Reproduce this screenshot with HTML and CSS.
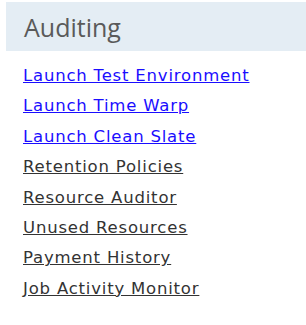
FILE: index.html
```html
<!DOCTYPE html>
<html>
<head>
<meta charset="utf-8">
<link rel="stylesheet" href="styles.css">
</head>
<body>
<div class="panel">
  <div class="header"><h2 class="title">Auditing</h2></div>
  <ul class="links">
    <li><a class="link link-blue" href="#">Launch Test Environment</a></li>
    <li><a class="link link-blue" href="#">Launch Time Warp</a></li>
    <li><a class="link link-blue" href="#">Launch Clean Slate</a></li>
    <li><a class="link" href="#">Retention Policies</a></li>
    <li><a class="link" href="#">Resource Auditor</a></li>
    <li><a class="link" href="#">Unused Resources</a></li>
    <li><a class="link" href="#">Payment History</a></li>
    <li><a class="link" href="#">Job Activity Monitor</a></li>
  </ul>
</div>
</body>
</html>
```
FILE: styles.css
```css
html, body {
  margin: 0;
  padding: 0;
  background: #ffffff;
}
.panel {
  padding: 2px 0 0 6px;
}
.header {
  background: #e4edf4;
  height: 49px;
  display: flex;
  align-items: center;
  padding-left: 18px;
}
.title {
  margin: 0;
  font-family: "Open Sans", "DejaVu Sans", sans-serif;
  font-weight: normal;
  font-size: 25px;
  color: #5a5a5a;
}
.links {
  list-style: none;
  margin: 0;
  padding: 10px 0 0 17px;
  display: flex;
  flex-direction: column;
  gap: 0;
}
.links li {
  height: 30.4px;
  line-height: 30px;
}
.link {
  font-family: "DejaVu Sans", sans-serif;
  font-size: 16.5px;
  letter-spacing: 0.8px;
  color: #333333;
  text-decoration: underline;
}
.link-blue {
  color: #1a0dff;
}
```
